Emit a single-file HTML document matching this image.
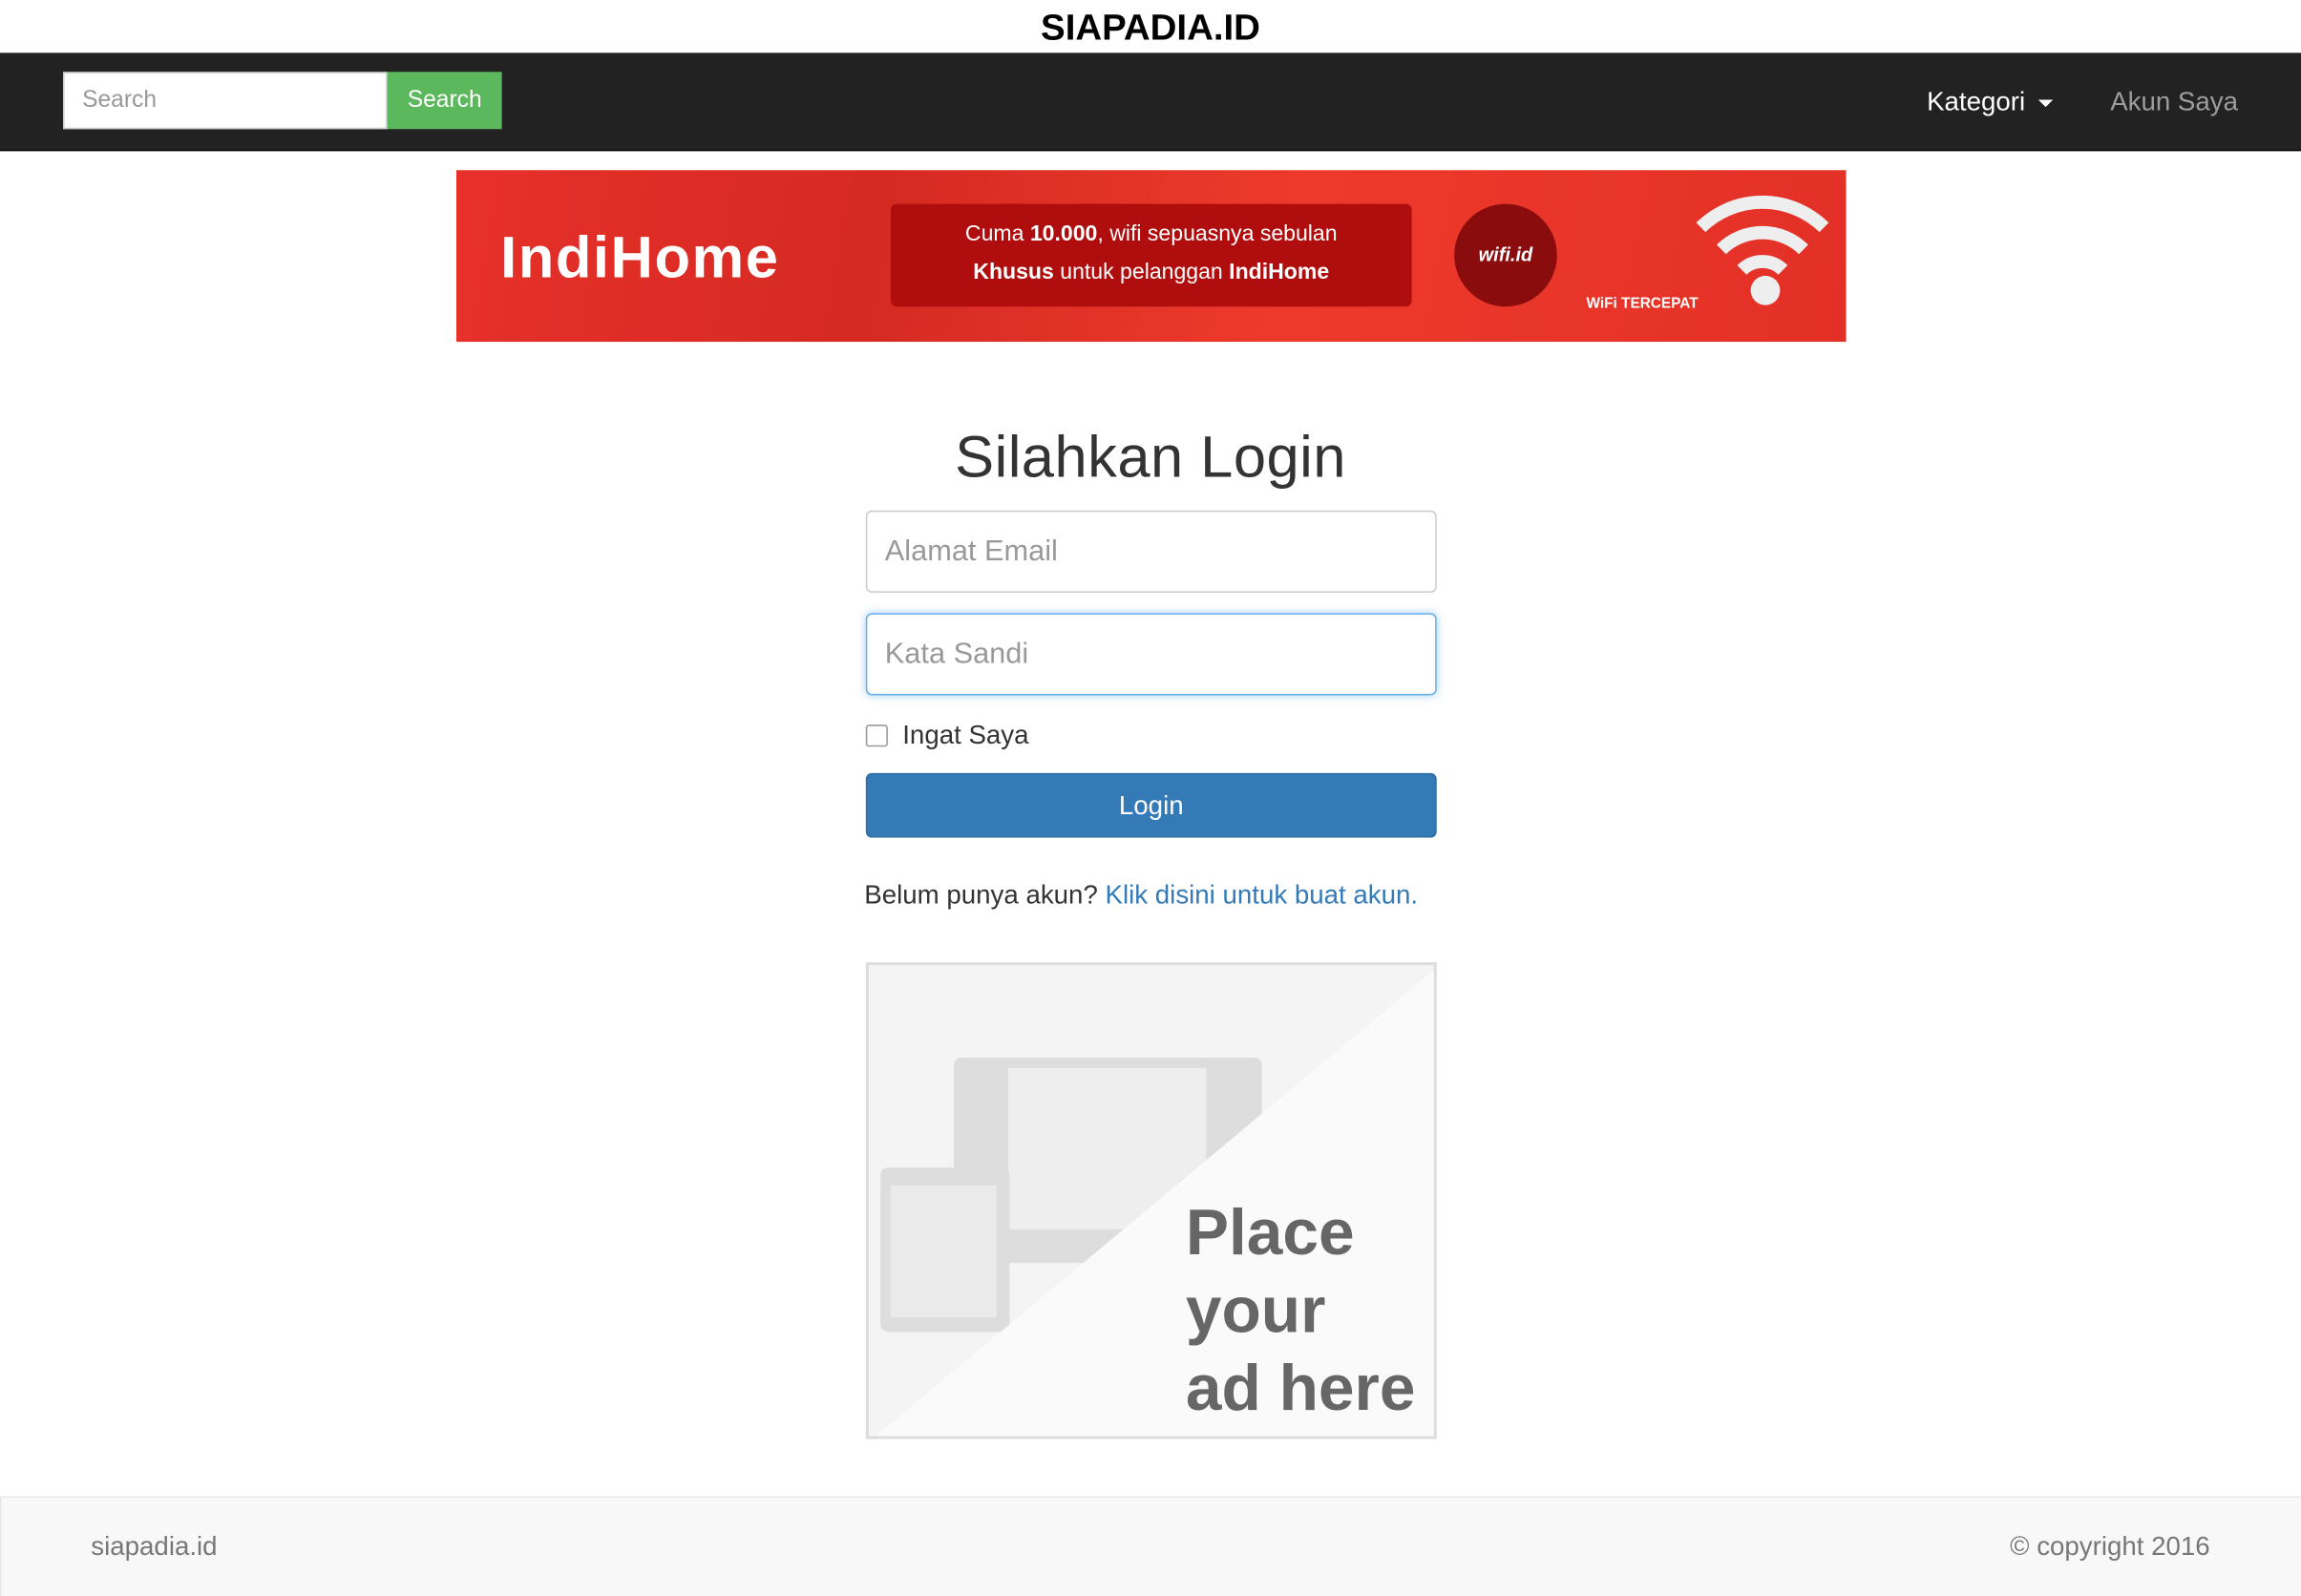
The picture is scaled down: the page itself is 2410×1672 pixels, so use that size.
<!DOCTYPE html>
<html><head><meta charset="utf-8"><style>
html,body{margin:0;padding:0;width:2410px;height:1672px;overflow:hidden;background:#fff;font-family:"Liberation Sans",Arial,sans-serif}
#w{position:absolute;left:0;top:0;width:1568px;height:1088px;transform:scale(1.53699,1.5368);transform-origin:0 0}
.a{position:absolute}
</style></head><body><div id="w">
<div class="a" style="left:0;width:1568px;top:5px;text-align:center;font-weight:bold;font-size:25px;color:#000">SIAPADIA.ID</div>
<div class="a" style="left:0;top:36px;width:1568px;height:66px;background:#222;border-bottom:1px solid #080808"></div>
<div class="a" style="left:43px;top:49px;width:221px;height:39px;background:#fff;border:1px solid #ccc;box-sizing:border-box;font-size:16px;color:#999;padding:10px 12px">Search</div>
<div class="a" style="left:264px;top:49px;width:78px;height:39px;background:#5cb85c;color:#fff;font-size:16px;line-height:39px;text-align:center">Search</div>
<div class="a" style="left:1313px;top:59px;font-size:18px;color:#fff">Kategori <span style="display:inline-block;border-left:5px solid transparent;border-right:5px solid transparent;border-top:5px solid #fff;vertical-align:middle;margin-left:4px"></span></div>
<div class="a" style="left:1438px;top:59px;font-size:18px;color:#9d9d9d">Akun Saya</div>

<div class="a" style="left:311px;top:116px;width:947px;height:117px;background:linear-gradient(100deg,#e8302a 0%,#d42a22 30%,#ee3a2c 60%,#e33027 100%);overflow:hidden">
 <div class="a" style="left:30px;top:38px;font-size:40px;font-weight:bold;color:#fff;letter-spacing:1px">IndiHome</div>
 <div class="a" style="left:296px;top:23px;width:355px;height:70px;background:#b00e0e;border-radius:4px;color:#fff;text-align:center;font-size:15px;line-height:26px;padding-top:8px;box-sizing:border-box">Cuma <b>10.000</b>, wifi sepuasnya sebulan<br><b>Khusus</b> untuk pelanggan <b>IndiHome</b></div>
 <div class="a" style="left:680px;top:23px;width:70px;height:70px;border-radius:50%;background:#8a0c0c;color:#fff;font-size:13px;font-weight:bold;font-style:italic;line-height:70px;text-align:center">wifi.id</div>
 <svg class="a" style="left:840px;top:14px" width="100" height="80" viewBox="0 0 100 80"><g fill="none" stroke="#eee" stroke-width="9"><path d="M8 25 A60 60 0 0 1 92 25"/><path d="M22 40 A40 40 0 0 1 78 40"/><path d="M36 54 A20 20 0 0 1 64 54"/></g><circle cx="52" cy="68" r="10" fill="#eee"/></svg>
 <div class="a" style="left:770px;top:86px;color:#fff;font-size:10px;font-weight:bold">WiFi TERCEPAT</div>
</div>

<div class="a" style="left:0;width:1568px;top:290px;text-align:center;font-size:40px;color:#333;letter-spacing:0.3px">Silahkan Login</div>
<div class="a" style="left:590px;top:348px;width:389px;height:56px;border:1px solid #ccc;border-radius:4px;box-sizing:border-box;font-size:20px;color:#999;padding:16px 12px">Alamat Email</div>
<div class="a" style="left:590px;top:418px;width:389px;height:56px;border:1px solid #66afe9;box-shadow:0 0 6px rgba(102,175,233,.6);border-radius:4px;box-sizing:border-box;font-size:20px;color:#999;padding:16px 12px">Kata Sandi</div>
<div class="a" style="left:590px;top:494px;width:13px;height:13px;border:1px solid #999;border-radius:2px"></div>
<div class="a" style="left:615px;top:491px;font-size:18px;color:#333">Ingat Saya</div>
<div class="a" style="left:590px;top:527px;width:389px;height:44px;background:#337ab7;border:1px solid #2e6da4;border-radius:4px;box-sizing:border-box;color:#fff;font-size:18px;line-height:42px;text-align:center">Login</div>
<div class="a" style="left:589px;top:600px;font-size:18px;color:#333">Belum punya akun? <span style="color:#337ab7">Klik disini untuk buat akun.</span></div>

<div class="a" style="left:590px;top:656px;width:389px;height:325px;border:2px solid #ddd;box-sizing:border-box;background:#f4f4f4;overflow:hidden">
 <div class="a" style="left:58px;top:63px;width:210px;height:140px;background:#ddd;border-radius:5px"></div>
 <div class="a" style="left:95px;top:70px;width:135px;height:110px;background:#eee"></div>
 <div class="a" style="left:8px;top:138px;width:88px;height:112px;background:#ddd;border-radius:5px"></div>
 <div class="a" style="left:15px;top:150px;width:72px;height:90px;background:#eaeaea"></div>
 <svg class="a" style="left:0;top:0" width="389" height="325"><polygon points="389,0 389,325 0,325" fill="#fafafa"/></svg>
 <div class="a" style="left:216px;top:156px;font-size:44px;font-weight:bold;color:#666;line-height:53px;white-space:nowrap;letter-spacing:0px">Place<br>your<br>ad here</div>
</div>

<div class="a" style="left:0;top:1020px;width:1568px;height:68px;background:#f8f8f8;border-top:1px solid #e7e7e7;border-left:1px solid #e7e7e7;box-sizing:border-box"></div>
<div class="a" style="left:62px;top:1044px;font-size:18px;color:#777">siapadia.id</div>
<div class="a" style="right:62px;top:1044px;font-size:18px;color:#777">© copyright 2016</div>
</div></body></html>
